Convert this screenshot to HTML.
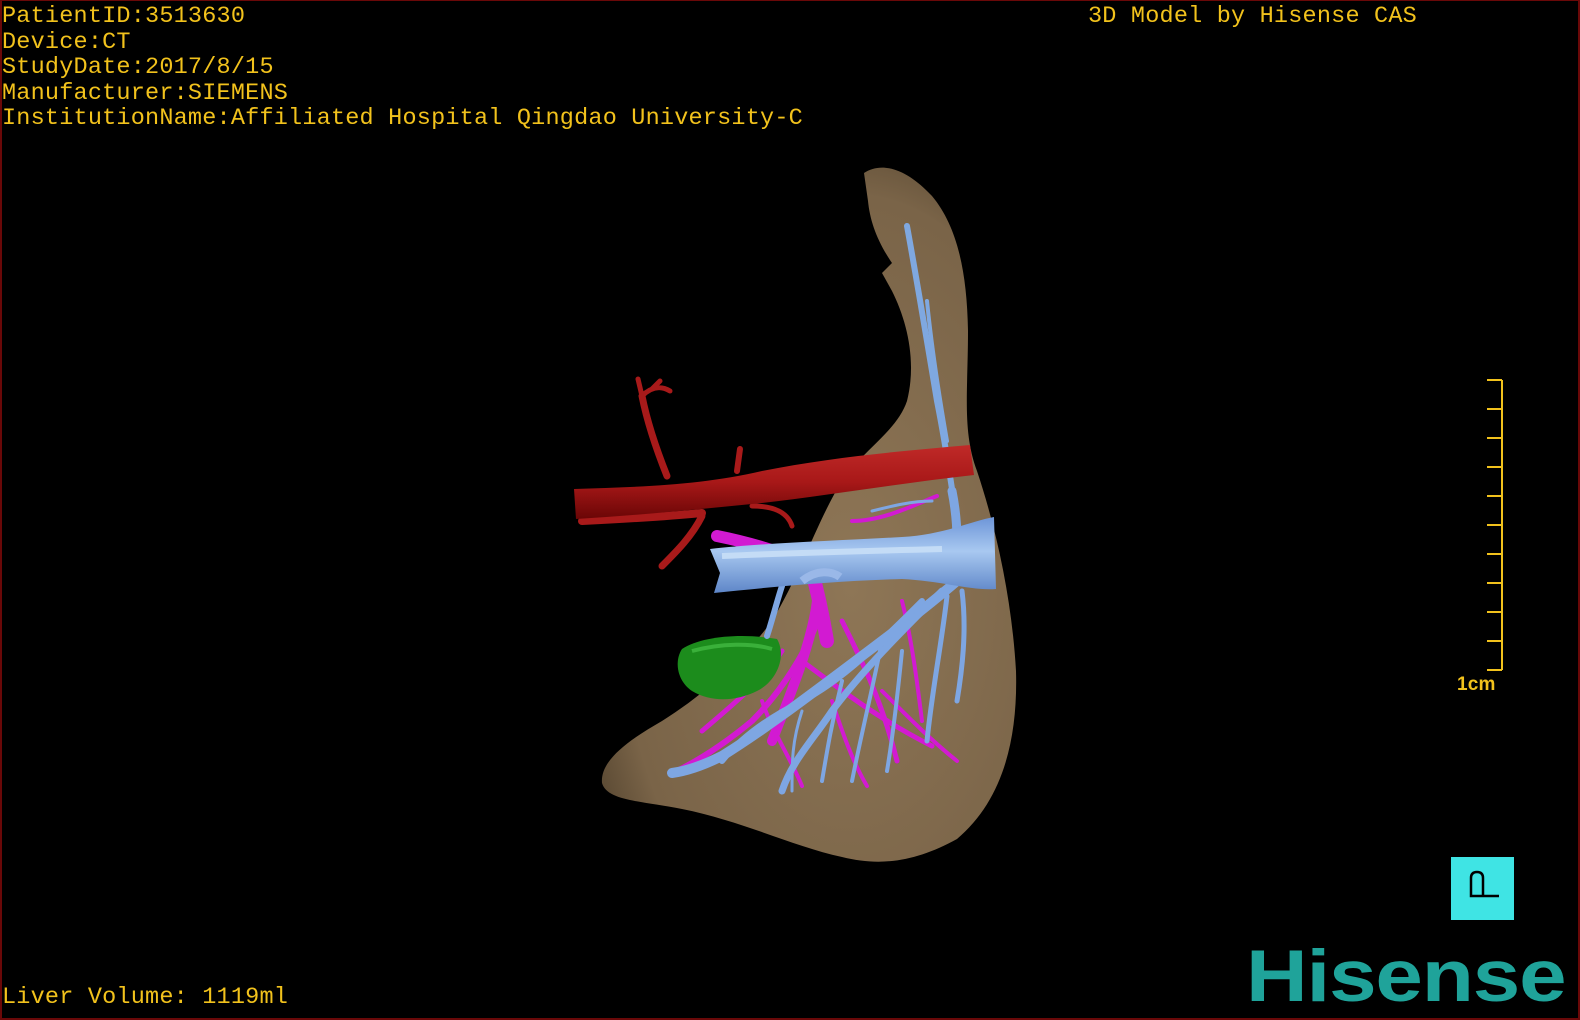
<!DOCTYPE html>
<html><head><meta charset="utf-8"><style>
html,body{margin:0;padding:0;background:#000;}
#c{position:relative;width:1580px;height:1020px;background:#000;overflow:hidden;box-sizing:border-box;border:2px solid #6a0808;border-top-width:1px;}
.t{position:absolute;font-family:"Liberation Mono",monospace;font-size:23.5px;color:#f2c21c;line-height:25.5px;white-space:pre;letter-spacing:0.2px;}
svg{position:absolute;left:0;top:0;}
.logo{position:absolute;left:1244px;top:936px;font-family:"Liberation Sans",sans-serif;font-weight:bold;font-size:73px;color:#1fa39a;letter-spacing:-1px;line-height:80px;transform:scaleX(1.17);transform-origin:left top;}
</style></head><body><div id="c">
<div class="t" style="left:0;top:3px">PatientID:3513630
Device:CT
StudyDate:2017/8/15
Manufacturer:SIEMENS
InstitutionName:Affiliated Hospital Qingdao University-C</div>
<div class="t" style="left:1086px;top:3px">3D Model by Hisense CAS</div>
<div class="t" style="left:0;top:984px">Liver Volume: 1119ml</div>
<div class="t" style="left:1455px;top:671px;font-family:'Liberation Sans',sans-serif;font-size:19px;font-weight:bold;">1cm</div>
<svg width="1580" height="1020" viewBox="0 0 1580 1020">
<defs>
<radialGradient id="lv" cx="0.6" cy="0.6" r="0.7"><stop offset="0" stop-color="#8e7656"/><stop offset="0.8" stop-color="#7a6448"/><stop offset="1" stop-color="#54442f"/></radialGradient>
<linearGradient id="rd" x1="0" y1="0" x2="0" y2="1"><stop offset="0" stop-color="#c02a28"/><stop offset="0.5" stop-color="#a81818"/><stop offset="1" stop-color="#6a0606"/></linearGradient>
<linearGradient id="bl" x1="0" y1="0" x2="0" y2="1"><stop offset="0" stop-color="#6d95d8"/><stop offset="0.45" stop-color="#a8c8f0"/><stop offset="1" stop-color="#5e86c8"/></linearGradient>
</defs>
<path d="M862,172 C880,160 905,168 930,195 C955,225 965,270 966,330 C966,390 960,430 975,470 C995,530 1010,600 1014,670 C1016,740 1000,800 955,838 C915,860 880,866 840,856 C790,845 740,820 680,808 C640,800 605,800 600,782 C598,760 625,740 660,720 C700,695 740,660 770,620 C800,570 815,520 840,480 C860,450 895,430 905,400 C915,360 905,320 890,290 L880,272 L890,262 C875,240 868,220 866,200 Z" fill="url(#lv)"/>
<g stroke="#7fa8e0" fill="none" stroke-linecap="round">
<path d="M905,225 C915,280 925,340 935,400 C945,450 950,490 955,520" stroke-width="6"/>
<path d="M925,300 C930,350 938,400 945,440" stroke-width="4"/>
</g>
<g stroke="#d21ad2" fill="none" stroke-linecap="round">
<path d="M820,610 C805,650 780,690 750,720 C720,745 695,760 675,770" stroke-width="6"/>
<path d="M815,600 C810,640 790,690 770,740" stroke-width="10"/>
<path d="M800,660 C840,690 880,720 930,745" stroke-width="5"/>
<path d="M840,620 C860,660 880,700 895,760" stroke-width="5"/>
<path d="M780,650 C760,680 735,700 700,730" stroke-width="5"/>
<path d="M830,700 C840,730 850,760 865,785" stroke-width="4"/>
<path d="M880,690 C910,720 930,740 955,760" stroke-width="4"/>
<path d="M850,520 C880,520 910,505 935,495" stroke-width="4"/>
<path d="M900,600 C910,640 915,680 920,720" stroke-width="4"/>
<path d="M760,700 C770,730 790,760 800,785" stroke-width="4"/>
<path d="M715,535 C740,540 770,548 800,560" stroke-width="12"/>
<path d="M810,570 C815,590 820,610 825,640" stroke-width="14"/>
</g>
<path d="M680,648 C700,635 740,632 775,638 C785,655 775,680 755,690 C735,700 710,702 690,690 C675,680 672,660 680,648 Z" fill="#1c8c1c"/>
<path d="M690,650 C720,642 750,642 770,648" stroke="#3ab03a" stroke-width="4" fill="none"/>
<g stroke="#7ea6e2" fill="none" stroke-linecap="round">
<path d="M955,580 C920,610 880,640 840,670 C800,700 760,730 720,755 C700,765 685,770 670,772" stroke-width="10"/>
<path d="M940,590 C900,630 860,670 830,710 C810,740 790,760 780,790" stroke-width="7"/>
<path d="M920,600 C880,640 840,680 800,700 C770,715 740,735 720,760" stroke-width="6"/>
<path d="M945,595 C940,640 930,690 925,740" stroke-width="5"/>
<path d="M960,590 C965,630 960,670 955,700" stroke-width="5"/>
<path d="M880,640 C870,690 860,730 850,780" stroke-width="4"/>
<path d="M900,650 C895,700 890,740 885,770" stroke-width="4"/>
<path d="M840,680 C830,720 825,750 820,780" stroke-width="4"/>
<path d="M800,710 C790,740 790,760 790,790" stroke-width="3"/>
<path d="M780,585 C775,600 770,620 765,635" stroke-width="6"/>
<path d="M955,540 C955,520 952,500 950,490" stroke-width="9"/>
<path d="M870,510 C890,505 910,500 930,500" stroke-width="3"/>
</g>
<g stroke="#a81a1a" fill="none" stroke-linecap="round">
<path d="M665,475 C655,450 645,420 640,395" stroke-width="7"/>
<path d="M640,395 L636,378 M640,395 C650,385 660,385 668,390 M650,388 L658,380" stroke-width="5"/>
<path d="M580,520 C620,518 660,516 700,512" stroke-width="8"/>
<path d="M700,515 C690,535 675,550 660,565" stroke-width="7"/>
<path d="M735,470 L738,448" stroke-width="6"/>
<path d="M750,505 C770,505 785,510 790,525" stroke-width="5"/>
</g>
<path d="M572,488 C640,486 700,484 760,470 C830,456 900,450 968,444 L972,474 C900,482 830,494 760,502 C700,508 640,514 574,518 Z" fill="url(#rd)"/>
<path d="M708,548 C760,542 830,540 900,536 C940,534 970,520 992,516 L994,588 C970,590 940,580 900,578 C830,580 770,586 712,592 L718,572 Z" fill="url(#bl)"/>
<path d="M720,555 C790,552 860,550 940,548" stroke="#c4dcf6" stroke-width="6" fill="none"/>
<path d="M800,580 C815,568 830,570 838,576" stroke="#9ab8e8" stroke-width="8" fill="none"/>
<g stroke="#f2c21c" stroke-width="2" fill="none">
<path d="M1500,379 V669"/>
<path d="M1485,379H1500M1485,408H1500M1485,437H1500M1485,466H1500M1485,495H1500M1485,524H1500M1485,553H1500M1485,582H1500M1485,611H1500M1485,640H1500M1485,669H1500"/>
</g>
<rect x="1449" y="856" width="63" height="63" fill="#3fe4e4"/>
<path d="M1469,895 V877 Q1469,871 1475,871 Q1481,871 1481,877 V895 Z M1481,895 H1497" stroke="#000" stroke-width="2.5" fill="none"/>
</svg>
<div class="logo">Hisense</div>
</div></body></html>
